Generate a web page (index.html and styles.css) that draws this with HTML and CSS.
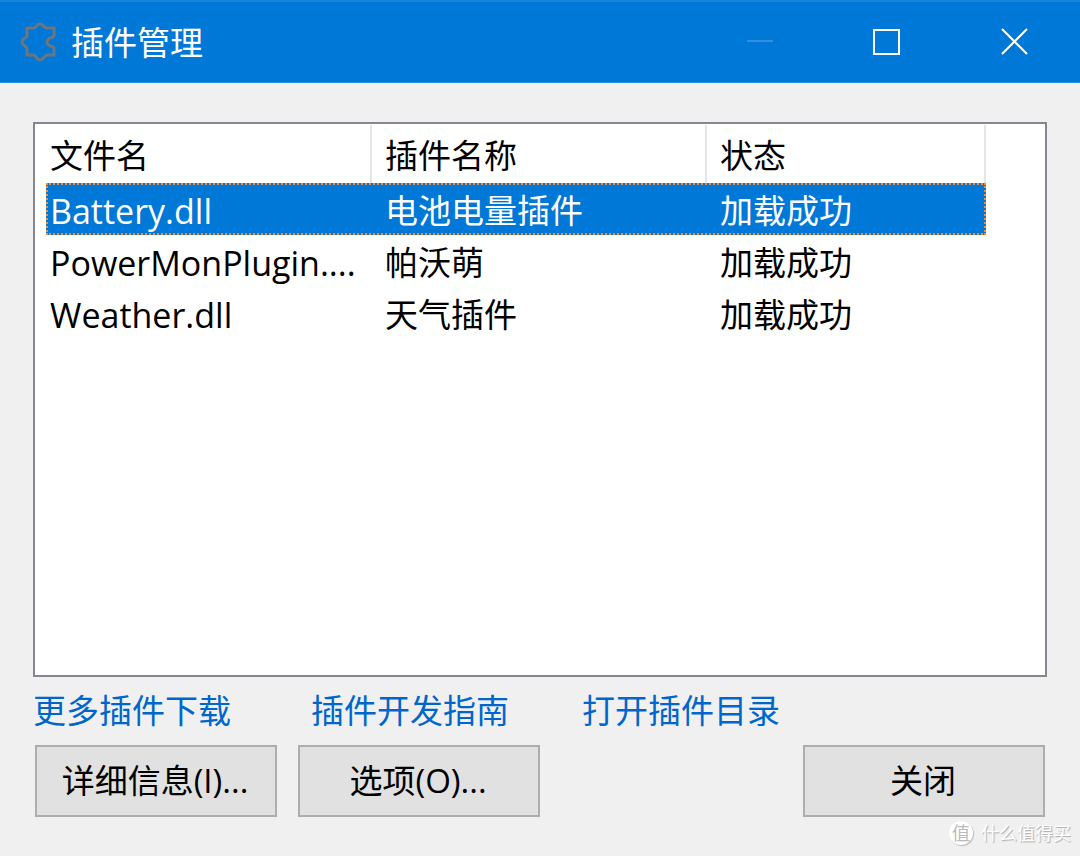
FILE: index.html
```html
<!DOCTYPE html>
<html lang="zh-CN">
<head>
    <meta charset="UTF-8">
    <title>插件管理</title>
    <link rel="stylesheet" href="styles.css">
</head>
<body>
    <div class="titlebar">
        <svg class="title-icon" width="36" height="40" viewBox="0 0 36 40">
            <path d="M7 6 H14 C16 6 16 2 20 2 C24 2 24 6 27 6 H34 V14 C34 16 27 15 27 20 C27 25 34 24 34 26 V33 H27 C24 33 24 38 20 38 C16 38 16 33 14 33 H7 V26 C7 24 2 24 2 20 C2 16 7 16 7 14 Z"/>
        </svg>
        <h1>插件管理</h1>
        <div class="window-buttons">
            <button type="button" aria-label="最小化" disabled>
                <svg width="28" height="28" viewBox="0 0 28 28"><path d="M1 13 H27"/></svg>
            </button>
            <button type="button" aria-label="最大化">
                <svg width="28" height="28" viewBox="0 0 28 28"><path d="M1 2 H26 V26 H1 Z"/></svg>
            </button>
            <button type="button" aria-label="关闭窗口">
                <svg width="28" height="28" viewBox="0 0 28 28"><path d="M2 1 L27 26 M27 1 L2 26"/></svg>
            </button>
        </div>
    </div>
    <div class="content">
        <div class="plugin-list">
            <table>
                <thead>
                    <tr>
                        <th class="col-file">文件名</th>
                        <th class="col-name">插件名称</th>
                        <th class="col-status">状态</th>
                    </tr>
                </thead>
                <tbody>
                    <tr class="selected">
                        <td class="file">Battery.dll</td>
                        <td>电池电量插件</td>
                        <td>加载成功</td>
                    </tr>
                    <tr>
                        <td class="file">PowerMonPlugin....</td>
                        <td>帕沃萌</td>
                        <td>加载成功</td>
                    </tr>
                    <tr>
                        <td class="file">Weather.dll</td>
                        <td>天气插件</td>
                        <td>加载成功</td>
                    </tr>
                </tbody>
            </table>
        </div>
        <div class="links">
            <a href="#">更多插件下载</a>
            <a href="#">插件开发指南</a>
            <a href="#">打开插件目录</a>
        </div>
        <div class="buttons">
            <button type="button">详细信息(I)...</button>
            <button type="button">选项(O)...</button>
            <button type="button" class="close">关闭</button>
        </div>
    </div>
    <div class="watermark">
        <span class="watermark-logo">值</span>
        <span>什么值得买</span>
    </div>
</body>
</html>
```

FILE: styles.css
```css
* {
    box-sizing: border-box;
}

body {
    margin: 0;
    min-height: 100vh;
    display: flex;
    flex-direction: column;
    position: relative;
    background-color: #f0f0f0;
    color: #000;
    font-family: "Open Sans", "Noto Sans CJK SC", sans-serif;
    font-size: 33px;
    line-height: 48px;
}

.titlebar {
    display: flex;
    align-items: center;
    height: 83px;
    padding: 0 3px 0 20px;
    background-color: #0078d7;
    border-top: 2px solid #1a84da;
    border-bottom: 1px solid #2b8edd;
    color: #fff;
}

.titlebar h1 {
    margin: 0 0 0 15px;
    padding-top: 2px;
    font-size: 33px;
    font-weight: 400;
}

.title-icon {
    fill: none;
    stroke: #6b7680;
    stroke-width: 3;
}

.window-buttons {
    display: flex;
    height: 100%;
    margin-left: auto;
}

.window-buttons button {
    display: flex;
    align-items: center;
    justify-content: center;
    width: 127px;
    padding: 0;
    border: none;
    background: none;
}

.window-buttons svg {
    fill: none;
    stroke: #fff;
    stroke-width: 2;
}

.window-buttons button:disabled svg {
    stroke: #338fdd;
}

.content {
    flex: 1;
    display: flex;
    flex-direction: column;
    padding: 39px 33px;
}

.plugin-list {
    flex: 1;
    padding: 1px 11px;
    background-color: #fff;
    border: 2px solid #828790;
}

table {
    width: 940px;
    table-layout: fixed;
    border-collapse: collapse;
}

th, td {
    padding: 4px 4px 0;
    text-align: left;
    font-weight: 400;
    white-space: nowrap;
}

td + td, th + th {
    padding-left: 13px;
}

th {
    height: 58px;
    background: linear-gradient(#e5e5e5, #e5e5e5) right / 2px 100% no-repeat;
}

.file {
    font-size: 34px;
}

.col-file {
    width: 326px;
}

.col-name {
    width: 335px;
}

.selected {
    background-color: #0078d7;
    color: #fff;
    outline: 2px dotted #ff8728;
    outline-offset: -2px;
}

.links {
    display: grid;
    grid-template-columns: 278px 271px auto;
    align-items: center;
    height: 68px;
}

.links a {
    color: #0066cc;
    text-decoration: none;
}

.buttons {
    display: flex;
    gap: 21px;
    padding: 0 2px;
}

.buttons button {
    width: 242px;
    height: 72px;
    padding: 0 2px 4px 0;
    background-color: #e1e1e1;
    border: 2px solid #adadad;
    color: #000;
    font-family: "Open Sans", "Noto Sans CJK SC", sans-serif;
    font-size: 33px;
}

.buttons .close {
    margin-left: auto;
}

/* 右下角水印 */
.watermark {
    position: absolute;
    right: 9px;
    bottom: 11px;
    display: flex;
    align-items: center;
    gap: 8px;
    color: #fff;
    font-size: 18px;
    line-height: 24px;
    text-shadow: 1px 1px 1px #aaa;
}

.watermark-logo {
    width: 24px;
    height: 24px;
    border-radius: 50%;
    background-color: #fff;
    box-shadow: 1px 1px 1px #bbb;
    color: #bbb;
    text-align: center;
    text-shadow: none;
}
```
